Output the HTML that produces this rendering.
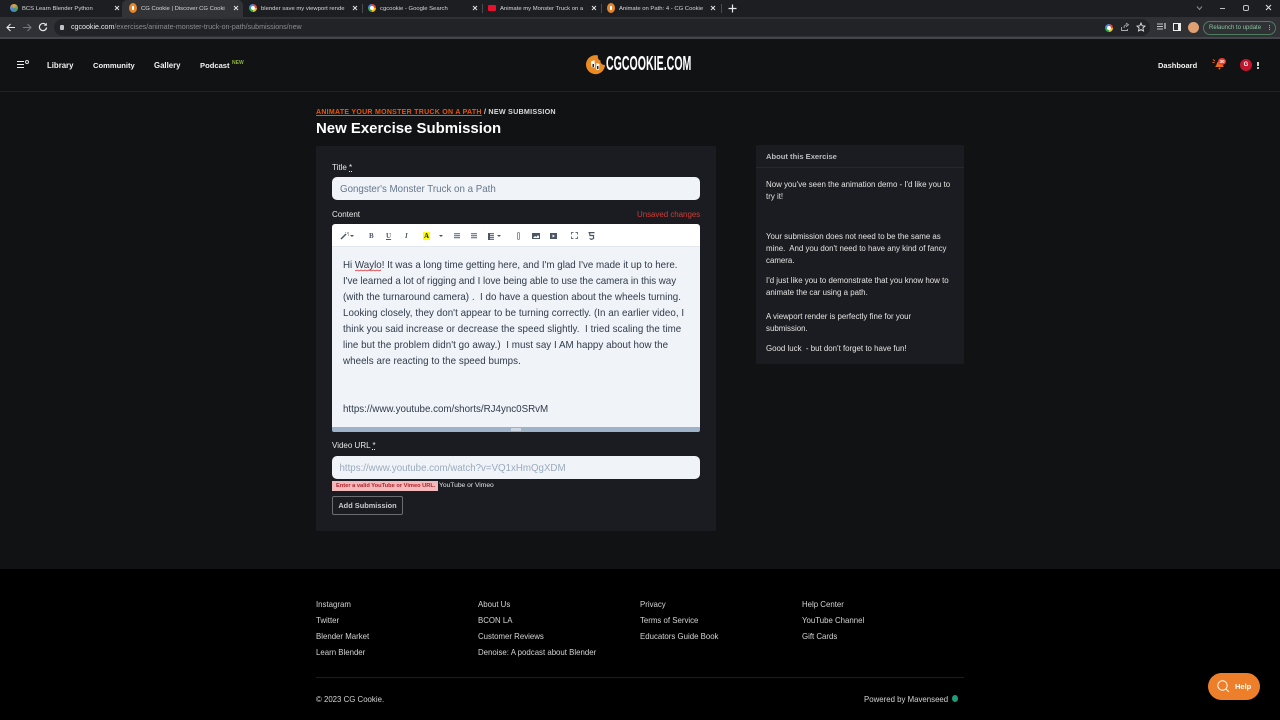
<!DOCTYPE html>
<html><head><meta charset="utf-8">
<style>
*{box-sizing:border-box}
html,body{margin:0;padding:0}
body{width:1280px;height:720px;overflow:hidden;background:#111214;position:relative;font-family:"Liberation Sans",sans-serif;color:#fff}
.a{position:absolute;white-space:nowrap}
.tab{position:absolute;top:4.500px;font-size:5.900px;line-height:8px;color:#d5d7da;white-space:nowrap;width:76px;overflow:hidden}
.x{position:absolute;top:5px}
.nav{position:absolute;top:60.500px;font-size:7.800px;line-height:10px;font-weight:bold;color:#f2f2f2;white-space:nowrap}
.side{position:absolute;left:766px;font-size:7.900px;line-height:12px;color:#e6e4e2;white-space:nowrap}
.ed{position:absolute;left:343px;font-size:9.780px;line-height:16px;color:#2f3b4a;white-space:nowrap}
.ft{position:absolute;font-size:7.850px;line-height:10px;color:#d4d4d4;white-space:nowrap}
.tb{position:absolute;top:232px;font-size:7px;line-height:8px;color:#4b5563;font-weight:bold}
.sep{position:absolute;top:4px;width:1px;height:9px;background:#4a4b50}
.g{position:absolute;width:8px;height:8px;border-radius:50%;background:conic-gradient(#ea4335 0 25%,#fbbc05 25% 50%,#34a853 50% 75%,#4285f4 75%)}
.g:after{content:"";position:absolute;left:2px;top:2px;width:4px;height:4px;border-radius:50%;background:#fff}
</style></head><body>
<div class="a" style="left:0;top:0;width:1280px;height:17px;background:#1d1e21"></div>
<div class="a" style="left:122px;top:0;width:121px;height:17px;background:#323337;border-radius:5px 5px 0 0"></div>
<div class="a" style="left:10px;top:4px;width:8px;height:8px;border-radius:50%;background:conic-gradient(#e8a33d,#4a9c5d,#4285f4,#e8a33d)"></div>
<div class="tab" style="left:22px">BCS Learn Blender Python</div>
<svg class="x" style="left:114px" width="6" height="6"><path d="M1 1L5 5M5 1L1 5" stroke="#dfe1e5"/></svg>
<svg class="a" style="left:129px;top:3px" width="8" height="10" viewBox="0 0 8 10"><ellipse cx="4" cy="5" rx="4" ry="5" fill="#e8872a"/><path d="M3 3h2v4H3z" fill="#fff"/></svg>
<div class="tab" style="left:141px;width:84px">CG Cookie | Discover CG Cookie</div>
<svg class="x" style="left:233px" width="6" height="6"><path d="M1 1L5 5M5 1L1 5" stroke="#dfe1e5"/></svg>
<div class="g" style="left:249px;top:4px"></div>
<div class="tab" style="left:261px;width:84px">blender save my viewport rende</div>
<svg class="x" style="left:352px" width="6" height="6"><path d="M1 1L5 5M5 1L1 5" stroke="#dfe1e5"/></svg>
<div class="sep" style="left:362px"></div>
<div class="g" style="left:368px;top:4px"></div>
<div class="tab" style="left:380px;width:84px">cgcookie - Google Search</div>
<svg class="x" style="left:472px" width="6" height="6"><path d="M1 1L5 5M5 1L1 5" stroke="#dfe1e5"/></svg>
<div class="sep" style="left:482px"></div>
<div class="a" style="left:488px;top:5px;width:8px;height:6px;border-radius:1px;background:#e8112d"></div>
<div class="tab" style="left:500px;width:84px">Animate my Monster Truck on a</div>
<svg class="x" style="left:591px" width="6" height="6"><path d="M1 1L5 5M5 1L1 5" stroke="#dfe1e5"/></svg>
<div class="sep" style="left:601px"></div>
<svg class="a" style="left:607px;top:3px" width="8" height="10" viewBox="0 0 8 10"><ellipse cx="4" cy="5" rx="4" ry="5" fill="#e8872a"/><path d="M3 3h2v4H3z" fill="#fff"/></svg>
<div class="tab" style="left:619px;width:84px">Animate on Path: 4 - CG Cookie</div>
<svg class="x" style="left:710px" width="6" height="6"><path d="M1 1L5 5M5 1L1 5" stroke="#dfe1e5"/></svg>
<div class="sep" style="left:721px"></div>
<svg class="a" style="left:728px;top:4px" width="9" height="9"><path d="M4.500 .5V8.500M.5 4.500H8.500" stroke="#e8eaed" stroke-width="1.200"/></svg>
<svg class="a" style="left:1196px;top:5px" width="7" height="6"><path d="M1 1.500L3.500 4.500L6 1.500" stroke="#8a8d92" fill="none"/></svg>
<div class="a" style="left:1220px;top:7.500px;width:5px;height:1px;background:#bdc1c6"></div>
<div class="a" style="left:1243px;top:5px;width:6px;height:6px;border:1px solid #bdc1c6;border-radius:2px"></div>
<svg class="a" style="left:1265px;top:4px" width="7" height="7"><path d="M1 1L6 6M6 1L1 6" stroke="#dfe1e5" stroke-width="1"/></svg>

<div class="a" style="left:0;top:17px;width:1280px;height:20px;background:#303135"></div>
<div class="a" style="left:0;top:37px;width:1280px;height:2px;background:#44454a"></div>
<div class="a" style="left:54px;top:19px;width:1096px;height:17px;border-radius:9px;background:#222327"></div>
<svg class="a" style="left:6px;top:23px" width="10" height="9" viewBox="0 0 10 9"><path d="M9 4.500H1.500M4.500 1L1 4.500L4.500 8" stroke="#e8eaed" fill="none" stroke-width="1.100"/></svg>
<svg class="a" style="left:22px;top:23px" width="10" height="9" viewBox="0 0 10 9"><path d="M1 4.500H8.500M5.500 1L9 4.500L5.500 8" stroke="#75787d" fill="none" stroke-width="1.100"/></svg>
<svg class="a" style="left:38px;top:22px" width="10" height="10" viewBox="0 0 10 10"><path d="M8 3A3.600 3.600 0 1 0 8.600 5.500" stroke="#e8eaed" fill="none" stroke-width="1.200"/><path d="M8.800 .8V3.800H5.800Z" fill="#e8eaed"/></svg>
<div class="a" style="left:60px;top:25px;width:4px;height:5px;background:#bdc1c6;border-radius:1px"></div>
<div class="a" style="left:71px;top:23px;font-size:7.100px;line-height:9px;color:#8a8d92"><span style="color:#e8eaed">cgcookie.com</span>/exercises/animate-monster-truck-on-path/submissions/new</div>
<div class="g" style="left:1105px;top:23.500px"></div>
<svg class="a" style="left:1120px;top:22px" width="10" height="10" viewBox="0 0 10 10"><path d="M1.500 5V8.500H7.500V7M4 6C4 3.500 5.500 2.800 7 2.800M6 1L8.500 2.800L6 4.800" stroke="#a8abaf" fill="none" stroke-width=".9"/></svg>
<svg class="a" style="left:1136px;top:22px" width="10" height="10" viewBox="0 0 10 10"><path d="M5 1L6.200 3.800L9 4.100L6.900 6L7.500 9L5 7.500L2.500 9L3.100 6L1 4.100L3.800 3.800Z" stroke="#dfe1e5" fill="none" stroke-width=".9"/></svg>
<svg class="a" style="left:1157px;top:23px" width="9" height="8" viewBox="0 0 9 8"><path d="M0 1H6M0 3.500H6M0 6H6" stroke="#c5c7ca" stroke-width="1.100"/><path d="M8 0V6" stroke="#c5c7ca" stroke-width="1.300"/></svg>
<div class="a" style="left:1173px;top:23px;width:8px;height:8px;border:1px solid #eee;border-left-width:1px;border-right-width:3px;background:#303135"></div>
<div class="a" style="left:1188px;top:22px;width:11px;height:11px;border-radius:50%;background:#e0a070"></div>
<div class="a" style="left:1203px;top:21px;width:73px;height:14px;border:1px solid #4e7c5f;border-radius:7px;font-size:6px;line-height:12px;color:#86c49b;padding-left:5px">Relaunch to update</div>
<div class="a" style="left:1269px;top:25px;width:1px;height:1px;background:#86c49b;box-shadow:0 2px 0 #86c49b,0 4px 0 #86c49b"></div>

<div class="a" style="left:17px;top:61px;width:7px;height:1px;background:#eee;box-shadow:0 3px 0 #eee,0 6px 0 #eee"></div>
<div class="a" style="left:25px;top:60px;width:4px;height:4px;border:1px solid #ddd;border-radius:50%"></div>
<div class="nav" style="left:47px">Library</div>
<div class="nav" style="left:93px;font-size:7.600px">Community</div>
<div class="nav" style="left:154px">Gallery</div>
<div class="nav" style="left:200px;font-size:7.600px">Podcast</div>
<div class="a" style="left:232px;top:59.500px;font-size:5px;line-height:6px;color:#8fb33f;font-weight:bold">NEW</div>

<svg class="a" style="left:586px;top:54px" width="20" height="21" viewBox="0 0 20 21"><path d="M12 1.500A9.500 9.500 0 1 0 19 11C16 11 14 9 14.500 6.500C12.500 6 11.500 4 12 1.500Z" fill="#ea8a22"/><path d="M5 7.500L8.500 6L9 13.500L5.500 13ZM10.500 9L13.500 10L13 16L10 15.500Z" fill="#fff"/><path d="M6.500 10h1.500v3H6.500zM11 12h1.500v3H11z" fill="#222"/></svg>
<div class="a" style="left:606px;top:54px;font-size:20px;line-height:20px;font-weight:bold;color:#fff;transform-origin:0 0;transform:scaleX(.53)">CGCOOKIE.COM</div>

<div class="nav" style="left:1158px;font-size:7.500px">Dashboard</div>
<svg class="a" style="left:1212px;top:57px" width="14" height="13" viewBox="0 0 14 13"><path d="M3 10C5 8.500 4.500 4 7.500 4C10.500 4 10 8.500 12 10Z" fill="#ee6a1a"/><circle cx="7.500" cy="11.500" r="1" fill="#ee6a1a"/><path d="M1 2.500L3 4M.5 5.500H2.500" stroke="#ee6a1a"/></svg>
<div class="a" style="left:1218px;top:57.500px;width:8px;height:7px;border-radius:50%;background:#ee3a2a;font-size:4.500px;line-height:7px;text-align:center;font-weight:bold">30</div>
<div class="a" style="left:1240px;top:59px;width:12px;height:12px;border-radius:50%;background:#c3152f;font-size:6px;line-height:12px;text-align:center;font-weight:bold">G</div>
<div class="a" style="left:1257px;top:62px;width:1.500px;height:4px;background:#ccc"></div>
<div class="a" style="left:1257px;top:67px;width:1.500px;height:1.500px;background:#ccc"></div>
<div class="a" style="left:0;top:91px;width:1280px;height:1px;background:#222326"></div>

<div class="a" style="left:316px;top:106.500px;font-size:7.200px;line-height:9px;letter-spacing:.22px;font-weight:bold;color:#d9d9d9"><span style="color:#e8570c;text-decoration:underline;letter-spacing:.28px;font-size:7px">ANIMATE YOUR MONSTER TRUCK ON A PATH</span> / NEW SUBMISSION</div>
<div class="a" style="left:316px;top:119.500px;font-size:14.950px;line-height:18px;font-weight:bold;color:#fff">New Exercise Submission</div>

<div class="a" style="left:316px;top:146px;width:400px;height:385px;background:#1a1c21;border-radius:2px"></div>
<div class="a" style="left:332px;top:162.500px;font-size:8px;line-height:10px;color:#e8e8e8">Title <span style="text-decoration:underline dotted">*</span></div>
<div class="a" style="left:332px;top:177px;width:368px;height:23px;background:#f0f3f8;border-radius:5px;font-size:9.760px;line-height:25px;color:#66778c;padding-left:8px">Gongster's Monster Truck on a Path</div>
<div class="a" style="left:332px;top:209.500px;font-size:8px;line-height:10px;color:#e8e8e8">Content</div>
<div class="a" style="left:637px;top:209.500px;font-size:7.900px;line-height:10px;color:#d33a34">Unsaved changes</div>

<div class="a" style="left:332px;top:224px;width:368px;height:23px;background:#fff;border-radius:3px 3px 0 0;border-bottom:1px solid #e3e7ee"></div>
<div class="a" style="left:332px;top:247px;width:368px;height:180px;background:#f0f3f8"></div>
<div class="a" style="left:332px;top:427px;width:368px;height:5px;background:#9fb3c8;border-radius:0 0 2px 2px"></div>
<div class="a" style="left:511px;top:428px;width:10px;height:3px;background:#cbd6e2"></div>

<svg class="a" style="left:340px;top:232px" width="10" height="8" viewBox="0 0 10 8"><path d="M1 7 L6 2" stroke="#4b5563" stroke-width="1.500"/><path d="M7 1h2M8 3h1M5 0h1" stroke="#6b7280"/></svg>
<div class="a" style="left:350px;top:235px;border:2px solid transparent;border-top-color:#4b5563"></div>
<div class="tb" style="left:369px;font-family:'Liberation Serif',serif">B</div>
<div class="tb" style="left:386px;font-family:'Liberation Serif',serif;text-decoration:underline">U</div>
<div class="tb" style="left:405px;font-family:'Liberation Serif',serif;font-style:italic">I</div>
<div class="tb" style="left:423px;top:232px;width:7px;height:8px;background:#ff0;color:#222;text-align:center;font-family:'Liberation Serif',serif">A</div>
<div class="a" style="left:439px;top:235px;border:2px solid transparent;border-top-color:#4b5563"></div>
<div class="a" style="left:454px;top:233px;width:6px;height:6px;background:repeating-linear-gradient(#7b8390 0 1px,#d5d9df 1px 2px)"></div>
<div class="a" style="left:471px;top:233px;width:6px;height:6px;background:repeating-linear-gradient(#7b8390 0 1px,#d5d9df 1px 2px)"></div>
<div class="a" style="left:488px;top:233px;width:6px;height:7px;background:linear-gradient(90deg,#4b5563 0 2px,transparent 2px),repeating-linear-gradient(#6b7280 0 1px,#d5d9df 1px 2px)"></div>
<div class="a" style="left:497px;top:235px;border:2px solid transparent;border-top-color:#4b5563"></div>
<div class="a" style="left:517px;top:232px;width:3px;height:8px;border:1px solid #8b95a1;border-radius:2px"></div>
<svg class="a" style="left:532px;top:233px" width="8" height="6"><rect width="8" height="6" fill="#4b5563"/><path d="M1 5L3 3L4.500 4L6 2L7 3.500V5Z" fill="#fff"/></svg>
<svg class="a" style="left:550px;top:233px" width="7" height="6"><rect width="7" height="6" fill="#4b5563"/><path d="M2.500 1.500L5 3L2.500 4.500Z" fill="#fff"/></svg>
<svg class="a" style="left:571px;top:232px" width="7" height="7" fill="none" stroke="#6b7280"><path d="M.5 2.500V.5H2.500M4.500 .5H6.500V2.500M6.500 4.500V6.500H4.500M2.500 6.500H.5V4.500"/></svg>
<svg class="a" style="left:588px;top:232px" width="7" height="8" fill="none" stroke="#4b5563" stroke-width="1.200"><path d="M.5 .6H6.500M1.500 .6L2 3.500H5.500V6.500L3.500 7.400L1.600 6.500"/></svg>

<svg class="a" style="left:355px;top:269px" width="28" height="3"><path d="M0 2 L2 1 L4 2 L6 1 L8 2 L10 1 L12 2 L14 1 L16 2 L18 1 L20 2 L22 1 L24 2 L26 1" fill="none" stroke="#d33" stroke-width=".7"/></svg>
<div class="ed" style="top:258px">Hi Waylo! It was a long time getting here, and I'm glad I've made it up to here.</div>
<div class="ed" style="top:274px;letter-spacing:-.04px">I've learned a lot of rigging and I love being able to use the camera in this way</div>
<div class="ed" style="top:290px;letter-spacing:.025px">(with the turnaround camera) .&nbsp; I do have a question about the wheels turning.</div>
<div class="ed" style="top:306px;letter-spacing:.05px">Looking closely, they don't appear to be turning correctly. (In an earlier video, I</div>
<div class="ed" style="top:322px;letter-spacing:.05px">think you said increase or decrease the speed slightly.&nbsp; I tried scaling the time</div>
<div class="ed" style="top:338px;letter-spacing:.05px">line but the problem didn't go away.)&nbsp; I must say I AM happy about how the</div>
<div class="ed" style="top:354px;letter-spacing:.05px">wheels are reacting to the speed bumps.</div>
<div class="ed" style="top:402px">https://www.youtube.com/shorts/RJ4ync0SRvM</div>

<div class="a" style="left:332px;top:441px;font-size:8px;line-height:10px;color:#e8e8e8">Video URL <span style="text-decoration:underline dotted">*</span></div>
<div class="a" style="left:332px;top:456px;width:368px;height:23px;background:#f0f3f8;border-radius:5px;font-size:9.730px;line-height:25px;color:#9aabbd;padding-left:7.500px">https://www.youtube.com/watch?v=VQ1xHmQgXDM</div>
<div class="a" style="left:332px;top:481px;width:106px;height:10px;background:#f4b9bb;font-size:5.700px;line-height:10px;font-weight:bold;color:#b3202a;padding-left:4px">Enter a valid YouTube or Vimeo URL.</div>
<div class="a" style="left:439px;top:480.500px;font-size:6.700px;line-height:10px;color:#e2e3e5">YouTube or Vimeo</div>
<div class="a" style="left:332px;top:496px;width:71px;height:19px;border:1px solid #6a6d72;border-radius:2px;font-size:7.400px;line-height:17px;text-align:center;color:#c9cbce;font-weight:bold">Add Submission</div>

<div class="a" style="left:756px;top:145px;width:208px;height:219px;background:#1a1c21;border-radius:2px"></div>
<div class="a" style="left:756px;top:167px;width:208px;height:1px;background:#26282d"></div>
<div class="side" style="top:150.500px;font-weight:bold;color:#b9bbbf;font-size:7.600px">About this Exercise</div>
<div class="side" style="top:178.500px">Now you've seen the animation demo - I'd like you to</div>
<div class="side" style="top:190.500px">try it!</div>
<div class="side" style="top:230.500px">Your submission does not need to be the same as</div>
<div class="side" style="top:242.500px">mine.&nbsp; And you don't need to have any kind of fancy</div>
<div class="side" style="top:254.500px">camera.</div>
<div class="side" style="top:274.500px">I'd just like you to demonstrate that you know how to</div>
<div class="side" style="top:286.500px">animate the car using a path.</div>
<div class="side" style="top:310.500px">A viewport render is perfectly fine for your</div>
<div class="side" style="top:322.500px">submission.</div>
<div class="side" style="top:342.500px">Good luck&nbsp; - but don't forget to have fun!</div>

<div class="a" style="left:0;top:569px;width:1280px;height:151px;background:#000"></div>
<div class="ft" style="left:316px;top:600px">Instagram</div>
<div class="ft" style="left:316px;top:616px">Twitter</div>
<div class="ft" style="left:316px;top:632px">Blender Market</div>
<div class="ft" style="left:316px;top:648px">Learn Blender</div>
<div class="ft" style="left:478px;top:600px">About Us</div>
<div class="ft" style="left:478px;top:616px">BCON LA</div>
<div class="ft" style="left:478px;top:632px">Customer Reviews</div>
<div class="ft" style="left:478px;top:648px">Denoise: A podcast about Blender</div>
<div class="ft" style="left:640px;top:600px">Privacy</div>
<div class="ft" style="left:640px;top:616px">Terms of Service</div>
<div class="ft" style="left:640px;top:632px">Educators Guide Book</div>
<div class="ft" style="left:802px;top:600px">Help Center</div>
<div class="ft" style="left:802px;top:616px">YouTube Channel</div>
<div class="ft" style="left:802px;top:632px">Gift Cards</div>
<div class="a" style="left:316px;top:677px;width:648px;height:1px;background:#1c1c1e"></div>
<div class="ft" style="left:316px;top:694.500px">© 2023 CG Cookie.</div>
<div class="ft" style="left:864px;top:694.500px">Powered by Mavenseed</div>
<div class="a" style="left:952px;top:695px;width:6px;height:7px;border-radius:50%;background:#1f9d78"></div>

<div class="a" style="left:1208px;top:673px;width:52px;height:27px;border-radius:14px;background:#ed7f2a"></div>
<svg class="a" style="left:1216px;top:679px" width="14" height="14" viewBox="0 0 14 14"><circle cx="6.500" cy="6.500" r="4.700" fill="none" stroke="#fff" stroke-width="1"/><path d="M10 10 L13 13" stroke="#fff" stroke-width="1"/></svg>
<div class="a" style="left:1235px;top:682px;font-size:7.500px;line-height:10px;font-weight:bold;color:#fff">Help</div>
</body></html>
